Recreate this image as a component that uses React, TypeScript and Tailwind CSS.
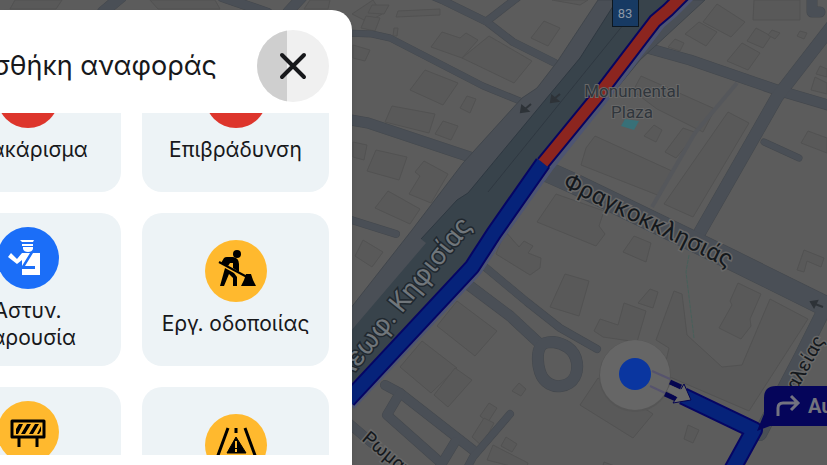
import type { ReactNode } from "react";

const buildings = [
  "373,0 382,14 368,22 352,14", "372,5 389,5 384,14 368,13", "366,16 380,18 375,31 361,28", "398,11 440,9 440,15 396,17",
  "394,28 398,28 397,36 393,36", "442,32 460,38 466,33 478,40 462,58 431,47", "489,36 532,61 514,83 462,58",
  "544,21 560,28 548,46 531,38", "425,70 458,83 443,105 410,90", "467,96 476,99 470,113 460,108",
  "392,106 435,114 429,133 385,122", "443,121 458,126 451,140 435,134", "376,150 407,157 399,180 367,171",
  "424,161 448,174 431,203 409,194 420,176 415,172", "388,191 420,209 410,224 375,208", "353,142 367,145 364,160 353,157",
  "353,45 370,50 365,61 353,58", "717,4 745,22 731,37 703,22", "699,22 717,32 706,46 685,34",
  "754,0 800,0 800,20 753,20", "756,28 771,36 763,48 747,41", "772,30 780,33 775,39 768,35", "742,43 760,53 748,70 727,61",
  "800,31 807,33 804,39 797,36", "675,39 684,43 680,51 668,47", "641,76 715,109 703,132 657,109 633,91",
  "595,136 672,171 660,196 581,165 586,148", "728,112 749,123 693,217 664,204", "654,125 662,130 656,142 644,136",
  "683,128 697,133 676,158 665,152", "808,131 827,138 827,153 801,143", "820,66 827,69 827,77 816,74",
  "815,77 827,83 827,94 811,90", "556,194 604,211 599,226 605,234 596,246 537,222", "505,231 519,247 524,241 533,246 528,253 541,258 540,268 530,275 496,254",
  "565,274 589,281 579,316 550,307", "634,236 651,243 646,262 623,252", "650,289 658,292 653,308 638,303",
  "624,303 646,311 637,342 603,337 594,331 600,319 618,325", "674,291 682,294 687,335 722,367 742,365 770,299 808,319 749,411 663,374 669,348 656,340",
  "738,283 761,294 750,319 751,326 741,339 719,328 732,305 730,301", "688,425 699,430 693,443 684,439", "598,378 653,414 633,438 580,405",
  "804,250 824,258 821,267 807,261 804,272 797,270", "457,301 497,331 475,356 437,326", "422,341 457,368 431,393 400,367",
  "455,368 472,380 448,407 434,395", "519,383 526,389 521,396 512,391", "489,403 497,408 488,422 480,416",
  "484,418 494,423 482,446 472,437", "506,437 517,444 512,452 501,446", "363,240 383,252 372,267 355,256",
  "493,445 528,463 526,470 487,460", "604,462 625,470 600,475", "552,0 588,0 580,5",
  "150,0 215,0 220,9 158,9", "15,0 62,0 56,9 10,9", "310,0 330,0 328,9 304,9",
];

const minorRoads: [string, number][] = [
  ["430,-5 442,0 487,22 513,42 555,63", 7], ["518,-3 487,21", 7], ["345,33 372,34 390,38 483,86 520,101", 6],
  ["345,119 368,123 473,158", 10], ["345,218 396,234", 7], ["121,-3 103,12", 11], ["222,-3 268,13", 9], ["302,-3 288,12", 10],
  ["647,48 690,60 777,90 835,107", 10], ["832,26 777,97 700,232", 12], ["764,142 799,158", 6], ["812,-5 812,12 820,12", 10],
  ["548,172 577,185 730,259 835,311", 20], ["824,310 800,358 760,434", 13], ["466,283 510,316 540,344", 10],
  ["485,267 527,302 560,328 597,349", 7], ["385,385 400,393 473,450", 9], ["400,393 387,415 440,462", 9],
  ["455,442 438,470", 9], ["510,414 473,457 465,472", 7], ["345,420 372,443", 9],
];

const loop = "M541 346C536 352 538 366 540 372C544 384 554 387 561 386C575 384 578 372 577 363C575 348 562 343 553 342C547 342 543 343 541 346Z";
const road = "#4a4f56";
const label = "[paint-order:stroke] font-[Roboto,'Noto_Sans',sans-serif]";

function CityMap() {
  return (
    <svg
      className="absolute inset-0 h-full w-full"
      viewBox="0 0 827 465"
      preserveAspectRatio="xMinYMin slice"
      role="img"
      aria-label="Χάρτης"
    >
      <rect width="827" height="465" fill="#5c5c5c" />
      <g fill="#595959" stroke="#525252" strokeWidth="1">
        {buildings.map((points) => <polygon key={points} points={points} />)}
      </g>
      <polyline points="737,83 695,133 652,207" fill="none" stroke="#55575b" strokeWidth="4" />
      <g fill="none" strokeLinecap="round" strokeLinejoin="round">
        {minorRoads.map(([points, width]) => (
          <polyline key={points} points={points} stroke="#44484d" strokeWidth={width + 1} />
        ))}
        <path d={loop} stroke="#44484d" strokeWidth="12" />
        {minorRoads.map(([points, width]) => (
          <polyline key={points} points={points} stroke={road} strokeWidth={width} />
        ))}
        <path d={loop} stroke={road} strokeWidth="11" />
      </g>
      <path d="M598 0L557 62L537 88L522 98L473 152L463 163L412 230L350 309V400L472 278L550 170L640 60L705 0Z" fill={road} stroke="#41464c" />
      <path d="M617 0L580 58L468 193L457 200L421 239L426 243L350 332V400L472 278L550 170L645 46L683 0Z" fill="#38434b" />
      <path d="M617 0L580 58L468 193L457 200L421 239M632 14L488 192" fill="none" stroke="#2f3841" />
      <g fill="#2e3338" stroke="#2e3338" strokeWidth="2">
        <path d="M531 104L524 110M521 112L522 106L528 111Z" />
        <path d="M560 94L554 99M551 102L552 96L558 101Z" />
        <path d="M823 307L815 304M811 302L817 301L814 307Z" />
      </g>
      <path d="M689 255L686 272L694 338" fill="none" stroke="#47605a" strokeWidth="1" strokeDasharray="4 1" />
      <polygon points="625,119 639,121 634,130 621,126" fill="#387078" />

      <g fill="none" strokeLinejoin="round">
        <path d="M687 -6L671 10L658 21L645 38L600 97L545 166L496 235L474 269L348 403" stroke="#4e5572" strokeWidth="17" />
        <path d="M684 -6L668 10L655 21L642 38L597 97L543 163" stroke="#080560" strokeWidth="15" />
        <path d="M543 163L494 233L472 267L348 400" stroke="#050564" strokeWidth="17" />
        <path d="M543 163L494 233L472 267L348 400" stroke="#06237a" strokeWidth="13" />
        <path d="M684 -6L668 10L655 21L642 38L597 97L543 163" stroke="#8c251f" strokeWidth="11" />
        <path d="M683 396L754 430L732 470" stroke="#050564" strokeWidth="18" />
        <path d="M683 396L754 430L732 470" stroke="#06237a" strokeWidth="14" />
      </g>

      <circle cx="635" cy="376" r="36" fill="#555" />
      <circle cx="635" cy="375" r="35" fill="#666" />
      <path d="M652 371L670 379M650 386L665 393" stroke="#56536d" strokeWidth="2" />
      <path d="M670 382L681 387M665 394L676 399" stroke="#050550" strokeWidth="5" />
      <path d="M670 385L681 390L684 384L691 400L673 403L677 397L667 391Z" fill="#6a6a6a" />
      <path d="M681 389L684 384L691 400L673 403L677 397" fill="none" stroke="#050550" strokeWidth="1" />
      <circle cx="635" cy="374" r="16" fill="#0a36a0" />

      <g>
        <rect x="612" y="-3" width="27" height="30" fill="#0d1720" />
        <rect x="613" y="-3" width="25" height="29" fill="#173a63" />
        <text x="625" y="18" textAnchor="middle" fontSize="13" fill="#8c98a5" className={label}>83</text>
      </g>
      <g textAnchor="middle" fontSize="17" fill="#30363c" stroke="#686868" strokeWidth="2" className={label}>
        <text x="632" y="97">Monumental</text>
        <text x="632" y="118">Plaza</text>
      </g>
      <g fill="#14181c" stroke="#686868" strokeWidth="3" className={label}>
        <text transform="translate(562 187) rotate(26)" fontSize="24">Φραγκοκκλησιάς</text>
        <text transform="translate(825 340) rotate(-61)" textAnchor="end" fontSize="19">Αμαλείας</text>
        <text transform="translate(361 440) rotate(40)" fontSize="19">Ρωμανού</text>
      </g>
      <text transform="translate(473 226) rotate(-51)" textAnchor="end" fontSize="27" fill="#70767b" stroke="#20282f" strokeWidth="3" className={label}>
        Λεωφ. Κηφισίας
      </text>

      <path d="M776 386H840V426H770L757 431L764 414V398Q764 386 776 386Z" fill="#05055a" />
      <path d="M778 416V408Q778 403 783 403H797M791 396L798 403L791 410" fill="none" stroke="#737380" strokeWidth="3" />
      <text x="808" y="413" fontSize="20" fontWeight="700" fill="#73737d" className={label}>Αυλίδος</text>
    </svg>
  );
}

function PoliceIcon() {
  return (
    <g fill="#fff">
      <path d="M23 13H37L36 15H25ZM25 17H36V19H25ZM26 20H36V22Q35 25 31 25Q27 25 26 22Z" />
      <path d="M11 30L14 26L20 32L25 26H33L25 39V33L20 37Z" />
      <path d="M36 26H43V48H25V42H38V39H28Z" />
    </g>
  );
}

function DiggingIcon() {
  return (
    <g>
      <circle cx="32" cy="14" r="4" />
      <path d="M16 23L19 18Q20 17 22 17H28Q34 18 34 24V32L28 28V23H25L23 26L18 24Z" />
      <path d="M14 22L42 37" stroke="#000" strokeWidth="2" />
      <path d="M20 28L29 33L32 37V46H28V38L24 34L19 46H15ZM36 46L39 40L41 34H46L48 40L51 46Z" />
    </g>
  );
}

function BarrierIcon() {
  return (
    <g>
      <path d="M15 20H47V36H15ZM22 37V46M40 37V46" fill="none" stroke="#000" strokeWidth="3" strokeLinejoin="round" />
      <path d="M19 33V28L22 23H26L21 33ZM30 23H34L28 33H24ZM38 23H42L36 33H32ZM44 25V30L42 33H40Z" />
    </g>
  );
}

function RoadHazardIcon() {
  return (
    <g>
      <path d="M23 14L12 44M40 14L51 44M31 14V19" fill="none" stroke="#000" strokeWidth="3" />
      <path d="M31 23L41 39H22Z" stroke="#000" strokeWidth="1" strokeLinejoin="round" />
      <path d="M31 27V34M31 35V38" stroke="#ffb92e" strokeWidth="2" />
    </g>
  );
}

type Report = { label: string; color: string; icon: ReactNode };

const reports: Report[] = [
  { label: "Τρακάρισμα", color: "bg-[#dd352c]", icon: null },
  { label: "Επιβράδυνση", color: "bg-[#dd352c]", icon: null },
  { label: "Αστυν. παρουσία", color: "bg-[#1b6ef8]", icon: <PoliceIcon /> },
  { label: "Εργ. οδοποιίας", color: "bg-[#ffb92e]", icon: <DiggingIcon /> },
  { label: "Κλειστή λωρίδα", color: "bg-[#ffb92e]", icon: <BarrierIcon /> },
  { label: "Εμπόδιο", color: "bg-[#ffb92e]", icon: <RoadHazardIcon /> },
];

function ReportTile({ label, color, icon }: Report) {
  return (
    <button
      type="button"
      className="flex h-[153px] flex-col items-center justify-center gap-2 rounded-[20px] bg-[#edf3f6] px-4 pb-0.5 text-[21px] leading-[27px] text-[#17181b]"
    >
      <span className={`size-[62px] shrink-0 rounded-full ${color}`}>
        <svg viewBox="0 0 62 62" className="size-full" aria-hidden="true">{icon}</svg>
      </span>
      <span>{label}</span>
    </button>
  );
}

export default function App() {
  return (
    <main className="relative flex h-screen w-full overflow-hidden bg-[#5c5c5c] pt-2.5 font-[Inter,'Noto_Sans',sans-serif]">
      <CityMap />
      <section
        role="dialog"
        aria-labelledby="report-title"
        className="relative flex w-[352px] shrink-0 flex-col overflow-hidden rounded-tr-[20px] bg-white pr-[23px] pb-2.5 shadow-md"
      >
        <header className="flex shrink-0 items-center justify-end gap-10 pt-5 pb-[11px]">
          <h1 id="report-title" className="text-[27px] leading-9 whitespace-nowrap text-[#17181b]">
            Προσθήκη αναφοράς
          </h1>
          <button type="button" aria-label="Κλείσιμο" className="relative size-[72px] shrink-0 overflow-hidden rounded-full bg-[#f0f0f0]">
            <span className="absolute inset-y-0 left-0 w-5/12 bg-[#cfcfcf]" />
            <svg viewBox="0 0 72 72" className="relative size-full" aria-hidden="true">
              <path d="M25 25L47 47M47 25L25 47" stroke="#17181b" strokeWidth="4" strokeLinecap="round" />
            </svg>
          </button>
        </header>
        <div className="flex min-h-0 flex-1 items-start justify-end overflow-hidden">
          <div className="-mt-[74px] grid w-[395px] shrink-0 grid-cols-2 gap-[21px]">
            {reports.map((report) => <ReportTile key={report.label} {...report} />)}
          </div>
        </div>
      </section>
    </main>
  );
}
